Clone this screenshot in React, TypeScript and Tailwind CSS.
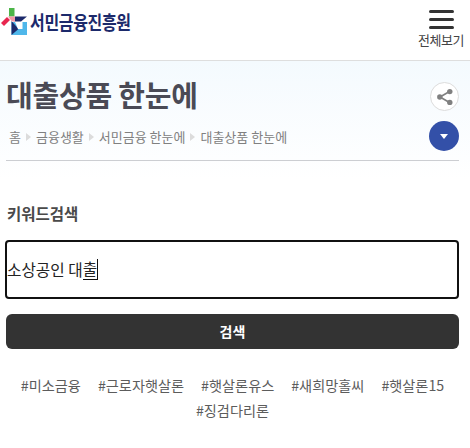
const kr = "font-['Noto_Sans_CJK_KR',sans-serif]"

const crumbs = ['금융생활', '서민금융 한눈에', '대출상품 한눈에']
const tags = ['#미소금융', '#근로자햇살론', '#햇살론유스', '#새희망홀씨', '#햇살론15', '#징검다리론']

function Logo() {
  return (
    <div className="flex items-center">
      <svg width="27" height="27" viewBox="0 0 27 27" className="ml-[1px]">
        <rect x="8" y="0" width="5.5" height="8.5" fill="#4cb648" />
        <path d="M0 15 L6 9 L9 12 L3 18 Z" fill="#e8264f" />
        <path d="M7 8.5 H14 V14 L10.5 13 Z" fill="#f29aa8" />
        <path d="M10.5 14 H26 V27 H10.5 Z" fill="#4fb7ea" />
        <path d="M14 8.5 H26 L20 13.5 H14 Z" fill="#1c2a6b" />
        <path d="M10.5 13 L17.5 21 L10.5 27 Z" fill="#1c2a6b" />
        <path d="M14 14 H21.5 V21 H17 Z" fill="#ffffff" />
      </svg>
      <span className={`${kr} ml-[2px] origin-left scale-x-[0.82] text-[19.5px] leading-none font-bold tracking-[-0.4px] whitespace-nowrap text-[#1c2a6b]`}>
        서민금융진흥원
      </span>
    </div>
  )
}

function ShareIcon() {
  return (
    <svg width="18" height="18" viewBox="0 0 18 18" fill="#808080" stroke="#808080" strokeWidth="1.7">
      <path d="M13.5 3.5 L4 9 L13.5 14.5" fill="none" />
      <circle cx="13.8" cy="3.6" r="2.7" stroke="none" />
      <circle cx="3.8" cy="9" r="2.7" stroke="none" />
      <circle cx="13.8" cy="14.4" r="2.7" stroke="none" />
    </svg>
  )
}

export default function App() {
  return (
    <div className={`${kr} h-[448px] w-[470px] overflow-hidden bg-white`}>
      <header className="flex h-[60px] items-start justify-between">
        <div className="pt-[8px]">
          <Logo />
        </div>
        <div className="mr-[5px] flex w-[48px] flex-col items-center pt-[10px]">
          <span className="block h-[3px] w-[25px] rounded-sm bg-[#333]" />
          <span className="mt-[5px] block h-[3px] w-[25px] rounded-sm bg-[#333]" />
          <span className="mt-[5px] block h-[3px] w-[25px] rounded-sm bg-[#333]" />
          <span className="mt-[3px] text-[13px] leading-[16px] tracking-[-0.4px] whitespace-nowrap text-[#444]">전체보기</span>
        </div>
      </header>

      <section className="h-[120px] border-t border-[#dedede] bg-gradient-to-b from-[#f4fafe] to-white pr-[11px] pl-[6px]">
        <div className="flex items-start justify-between pt-[20px]">
          <h1 className="text-[29px] leading-[26px] font-bold tracking-[-0.2px] text-[#4a4a55]">대출상품 한눈에</h1>
          <button className="mt-[1px] flex h-[29px] w-[29px] items-center justify-center rounded-full border border-[#dcdcdc] bg-white">
            <ShareIcon />
          </button>
        </div>
        <div className="flex h-[50px] items-start justify-between border-b border-[#ccced2]">
          <nav className="flex items-center pt-[18px] pl-[3px] text-[13px] leading-[16px] text-[#808080]">
            <span>홈</span>
            {crumbs.map((c) => (
              <span key={c} className="flex items-center">
                <span className="mx-[5px] h-0 w-0 border-y-[4px] border-l-[5px] border-y-transparent border-l-[#dcdcdc]" />
                {c}
              </span>
            ))}
          </nav>
          <button className="mt-[10px] flex h-[30px] w-[30px] items-center justify-center rounded-full bg-[#3350a8]">
            <span className="h-0 w-0 border-x-[4px] border-t-[5px] border-x-transparent border-t-white" />
          </button>
        </div>
      </section>

      <section className="pt-[23px] pr-[11px] pl-[5px]">
        <div className="pl-[2px] text-[15.5px] leading-[20px] font-bold text-[#4a4a4a]">키워드검색</div>
        <div className="mt-[17px] flex h-[59px] items-center rounded-[4px] border-2 border-[#111] bg-white text-[15.7px] text-[#222]">
          <span>소상공인 대</span>
          <span className="border-r border-b border-[#111] leading-[20px]">출</span>
        </div>
        <button className="mt-[15px] ml-px h-[35px] w-[453px] rounded-[6px] bg-[#333] text-[14px] font-bold text-white">검색</button>
        <div className="mt-[24px] ml-px flex flex-wrap justify-center gap-x-[17px] text-[14.2px] leading-[25px] text-[#5c5c5c]">
          {tags.map((t) => (
            <span key={t}>{t}</span>
          ))}
        </div>
      </section>
    </div>
  )
}
